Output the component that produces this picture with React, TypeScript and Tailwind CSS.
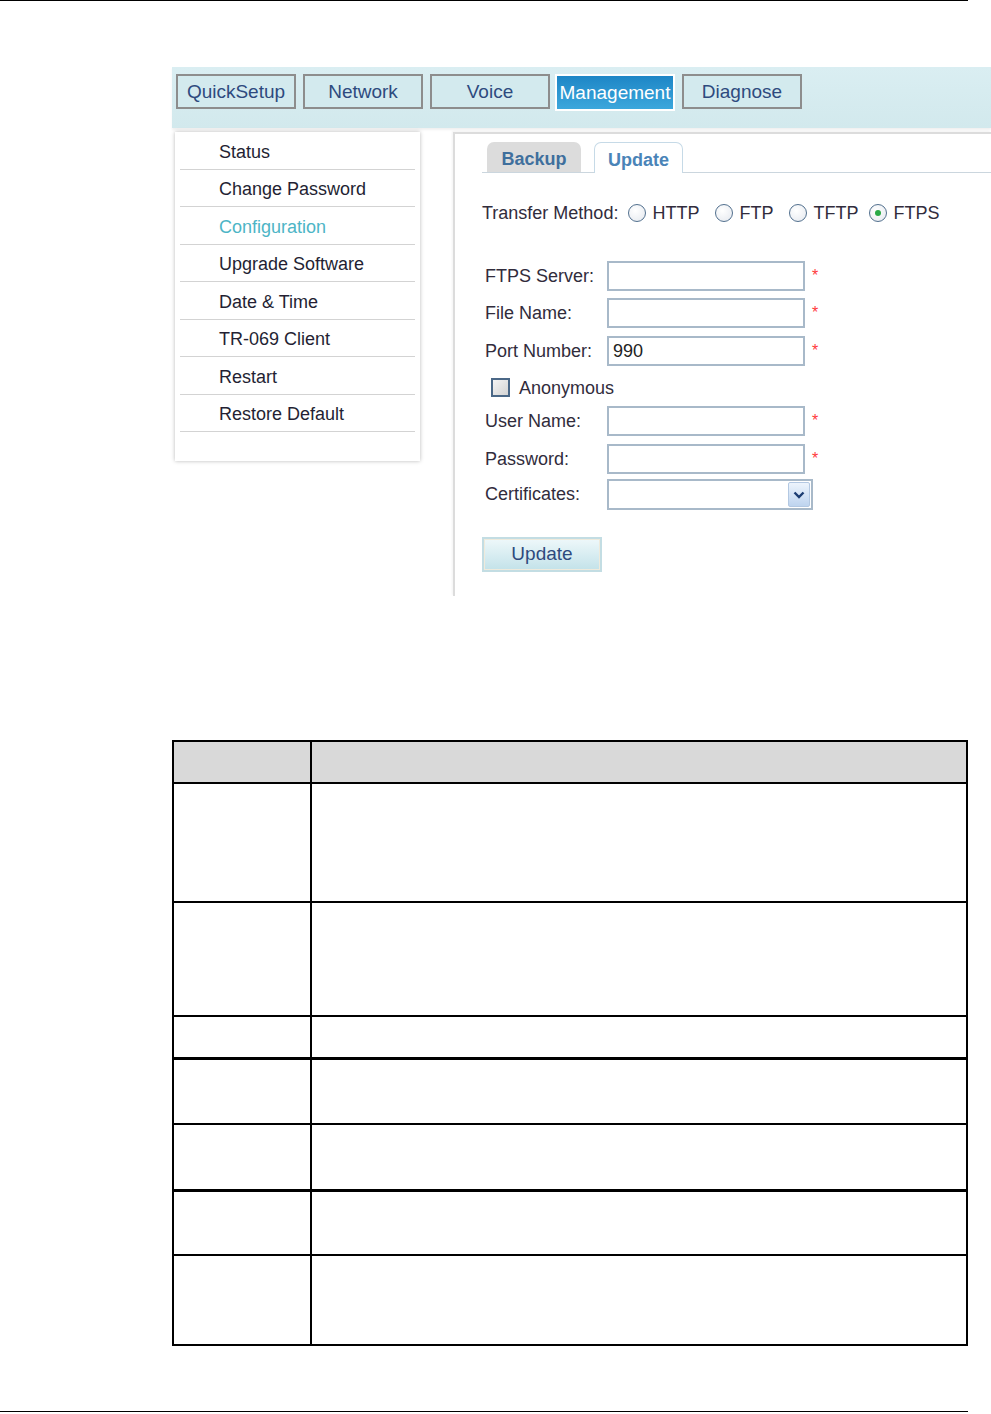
import React from "react";

function Radio({ checked }: { checked?: boolean }) {
  return (
    <span className="flex h-[18px] w-[18px] items-center justify-center rounded-full border-[1.5px] border-[#52708e] bg-[radial-gradient(circle_at_40%_35%,#ffffff,#e4e8ee)]">
      {checked ? <span className="h-[6px] w-[6px] rounded-full bg-[#2aa946]" /> : null}
    </span>
  );
}

function Star() {
  return <span className="ml-[7px] mt-[7px] self-start text-[16px] leading-none text-[#ff3b3b]">*</span>;
}

function Field({ label, value, mt }: { label: string; value?: string; mt: string }) {
  return (
    <div className={`flex h-[30px] items-center ${mt}`}>
      <span className="w-[152px] shrink-0 whitespace-nowrap pl-[30px] text-[18px] text-[#312c3c]">{label}</span>
      <div className="flex h-[30px] w-[198px] shrink-0 items-center border-2 border-[#a8b9c9] bg-white pl-[4px] text-[18px] text-[#222]">
        {value}
      </div>
      <Star />
    </div>
  );
}

const menu = ["Status", "Change Password", "Configuration", "Upgrade Software", "Date & Time", "TR-069 Client", "Restart", "Restore Default"];

export default function App() {
  const navBtn = "flex h-[35px] w-[120px] shrink-0 items-center justify-center border-2 border-[#8d8d8d] bg-[#d3eaee] pt-[1px] text-[19px] text-[#2e4a7e]";
  return (
    <div className="min-h-[1414px] w-[991px] bg-white font-['Liberation_Sans',Arial,sans-serif]">
      <div className="h-px w-[968px] bg-black" />

      {/* nav bar */}
      <div className="ml-[172px] mt-[66px] flex h-[61px] w-[819px] items-start bg-gradient-to-b from-[#daeef2] to-[#d2e9ed] pl-[4px] pt-[7px] shadow-[0_2px_2px_rgba(0,0,0,0.06)]">
        <div className={navBtn}>QuickSetup</div>
        <div className={`${navBtn} ml-[7px]`}>Network</div>
        <div className={`${navBtn} ml-[7px]`}>Voice</div>
        <div className="ml-[5px] flex h-[37px] w-[120px] shrink-0 items-center justify-center border-2 border-white bg-gradient-to-b from-[#1d86c6] to-[#3ba7dc] pt-[1px] text-[19px] text-white">
          Management
        </div>
        <div className={`${navBtn} ml-[7px]`}>Diagnose</div>
      </div>

      {/* panels */}
      <div className="mt-[4px] flex items-start">
        <div className="ml-[175px] h-[329px] w-[245px] shrink-0 bg-white px-[5px] shadow-[0_0_4px_rgba(0,0,0,0.28)]">
          {menu.map((m) => (
            <div
              key={m}
              className={`flex h-[37.5px] items-center border-b border-[#d3d3d3] pl-[39px] pt-[4px] text-[18px] ${
                m === "Configuration" ? "text-[#4db5c6]" : "text-[#241f33]"
              }`}
            >
              {m}
            </div>
          ))}
        </div>

        <div className="ml-[33px] h-[464px] w-[538px] shrink-0 border-l-2 border-t-2 border-[#dcdcdc] bg-white shadow-[-1px_-1px_2px_rgba(0,0,0,0.05)]">
          {/* tabs */}
          <div className="ml-[27px] mt-[9px] flex h-[30px] items-end border-b border-[#cbd6de]">
            <div className="ml-[5px] flex h-[30px] w-[94px] items-center justify-center rounded-t-[7px] bg-[#dcdcdc] pt-[5px] text-[18px] font-bold text-[#3f6f9d]">
              Backup
            </div>
            <div className="relative top-[1px] ml-[13px] flex h-[31px] w-[89px] items-center justify-center rounded-t-[7px] border border-b-0 border-[#c6dae7] bg-white pt-[5px] text-[18px] font-bold text-[#4a84b8]">
              Update
            </div>
          </div>

          {/* transfer method */}
          <div className="ml-[27px] mt-[28px] flex h-[24px] items-center text-[18px] text-[#312c3c]">
            <span>Transfer Method:</span>
            <span className="ml-[10px]"><Radio /></span>
            <span className="ml-[6px]">HTTP</span>
            <span className="ml-[16px]"><Radio /></span>
            <span className="ml-[6px]">FTP</span>
            <span className="ml-[16px]"><Radio /></span>
            <span className="ml-[6px]">TFTP</span>
            <span className="ml-[11px]"><Radio checked /></span>
            <span className="ml-[6px]">FTPS</span>
          </div>

          <Field label="FTPS Server:" mt="mt-[36px]" />
          <Field label="File Name:" mt="mt-[7px]" />
          <Field label="Port Number:" value="990" mt="mt-[8px]" />

          <div className="mt-[12px] flex h-[19px] items-center pl-[36px]">
            <span className="h-[19px] w-[19px] border-2 border-[#4b6887] bg-gradient-to-br from-[#f4f4f4] to-[#d4d4d4]" />
            <span className="ml-[9px] pt-[2px] text-[18px] text-[#312c3c]">Anonymous</span>
          </div>

          <Field label="User Name:" mt="mt-[9px]" />
          <Field label="Password:" mt="mt-[8px]" />

          <div className="mt-[5px] flex h-[31px] items-center">
            <span className="w-[152px] shrink-0 whitespace-nowrap pl-[30px] text-[18px] text-[#312c3c]">Certificates:</span>
            <div className="flex h-[31px] w-[206px] shrink-0 items-center justify-end border-2 border-[#a8b9c9] bg-white pr-[1px]">
              <div className="flex h-[25px] w-[22px] items-center justify-center rounded-[2px] border border-[#b3c8e2] bg-gradient-to-b from-[#edf4fc] to-[#bed4ef]">
                <svg width="12" height="8" viewBox="0 0 12 8">
                  <path d="M1.5 1.5 L6 6 L10.5 1.5" fill="none" stroke="#1c3d72" strokeWidth="2.4" />
                </svg>
              </div>
            </div>
          </div>

          <div className="ml-[27px] mt-[27px] flex h-[35px] w-[120px] items-center justify-center border-2 border-[#c3dde3] bg-gradient-to-b from-[#eef8fa] to-[#c3e2e9] text-[19px] text-[#2e4a7e] shadow-[inset_0_0_0_1px_#eeeadc]">
            Update
          </div>
        </div>
      </div>

      {/* table */}
      <div className="ml-[172px] mt-[144px] w-[796px] border-2 border-black">
        <div className="flex h-[40px] bg-[#d9d9d9]">
          <div className="w-[138px] border-r-2 border-black" />
          <div className="flex-1" />
        </div>
        <div className="flex h-[119px] border-t-2 border-black">
          <div className="w-[138px] border-r-2 border-black" />
        </div>
        <div className="flex h-[114px] border-t-2 border-black">
          <div className="w-[138px] border-r-2 border-black" />
        </div>
        <div className="flex h-[42px] border-t-2 border-black">
          <div className="w-[138px] border-r-2 border-black" />
        </div>
        <div className="flex h-[66px] border-t-[3px] border-black">
          <div className="w-[138px] border-r-2 border-black" />
        </div>
        <div className="flex h-[66px] border-t-2 border-black">
          <div className="w-[138px] border-r-2 border-black" />
        </div>
        <div className="flex h-[65px] border-t-[3px] border-black">
          <div className="w-[138px] border-r-2 border-black" />
        </div>
        <div className="flex h-[90px] border-t-2 border-black">
          <div className="w-[138px] border-r-2 border-black" />
        </div>
      </div>

      <div className="mt-[65px] h-px w-[968px] bg-black" />
    </div>
  );
}
